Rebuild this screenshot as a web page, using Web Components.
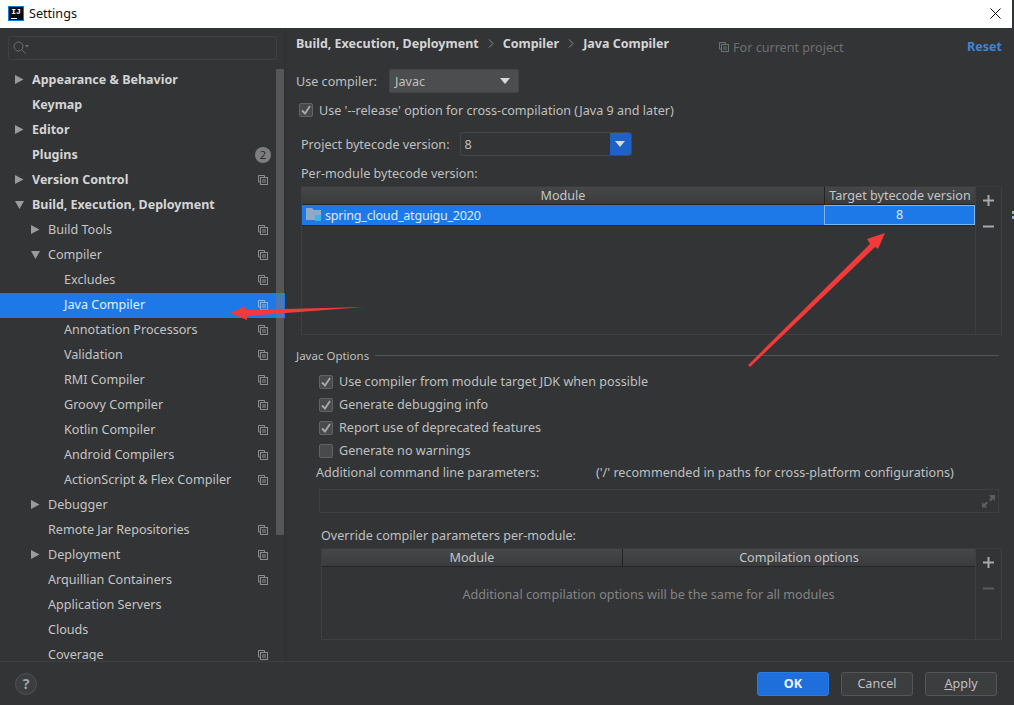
<!DOCTYPE html>
<html>
<head>
<meta charset="utf-8">
<title>Settings</title>
<style>
html, body { margin: 0; height: 100%; overflow: hidden; background: #333435; }
body { font: 12.6px "Noto Sans", sans-serif; color: #bfc0c1; }
</style>
</head>
<body>
<settings-dialog></settings-dialog>
<script>
const COPY_ICON = `<svg width="10" height="10" viewBox="0 0 10 10" fill="none" stroke="currentColor"><path d="M6.500 2V.5H.5v6.500H2"/><rect x="2.500" y="2.500" width="7" height="7"/><path d="M4 5h4M4 7h4"/></svg>`;

class TitleBar extends HTMLElement {
    connectedCallback() {
        this.attachShadow({ mode: "open" }).innerHTML = `
        <style>
        :host { display: flex; align-items: center; height: 28px; padding-bottom: 2px; box-sizing: border-box; background: #fff; color: #111; margin-right: 2px; }
        .logo { width: 16px; height: 15px; margin-left: 8px; background: #0b0b0b; border: 1px solid #0f7fd6; box-sizing: border-box; color: #fff; font: bold 8px/9px "Liberation Mono", monospace; text-align: center; position: relative; }
        .logo i { position: absolute; left: 2px; bottom: 1px; width: 6px; height: 1px; background: #fff; }
        .name { margin-left: 5px; flex: 1; }
        svg { margin-right: 11px; }
        </style>
        <div class="logo">IJ<i></i></div>
        <div class="name">Settings</div>
        <svg width="11" height="11" viewBox="0 0 11 11" stroke="#111" fill="none"><path d="M.5.5l10 10M10.500.5l-10 10"/></svg>`;
    }
}

class TreeRow extends HTMLElement {
    connectedCallback() {
        const level = +this.getAttribute("level") || 0;
        const arrow = this.getAttribute("arrow");
        const badge = this.getAttribute("badge");
        const shape = arrow === "down" ? "M0 1h9L4.500 9z" : "M0 0l8.500 4.500L0 9z";
        this.attachShadow({ mode: "open" }).innerHTML = `
        <style>
        :host { display: flex; align-items: center; height: 25px; padding-bottom: 2px; box-sizing: border-box; position: relative; white-space: nowrap; color: #c4c5c6; }
        :host([bold]) { font-weight: 700; font-size: 12.5px; color: #d3d4d5; }
        :host([selected]) { background: #1d79e8; color: #e6eefa; }
        .arrow { width: 10px; height: 9px; margin-right: 7px; flex: none; }
        .arrow svg { display: block; }
        .text { flex: 1; margin-top: -1px; }
        .side { width: 16px; margin-right: 14px; display: flex; justify-content: center; color: #8c8e8f; }
        :host([selected]) .side { color: #8fb6e6; }
        .badge { width: 16px; height: 16px; border-radius: 50%; background: #7d7e7f; color: #2b2b2b; font: 11px/16px "Noto Sans", sans-serif; text-align: center; }
        </style>
        <div class="arrow" style="margin-left:${15 + level * 16}px">${arrow ? `<svg width="9" height="9" viewBox="0 0 9 9"><path fill="#9a9b9c" d="${shape}"/></svg>` : ""}</div>
        <div class="text"><slot></slot></div>
        <div class="side">${badge ? `<div class="badge">${badge}</div>` : this.hasAttribute("copy") ? COPY_ICON : ""}</div>`;
    }
}

class SettingsTree extends HTMLElement {
    connectedCallback() {
        const items = [
            ["Appearance & Behavior", 0, "right", "bold"],
            ["Keymap", 0, "", "bold"],
            ["Editor", 0, "right", "bold"],
            ["Plugins", 0, "", "bold badge=2"],
            ["Version Control", 0, "right", "bold copy"],
            ["Build, Execution, Deployment", 0, "down", "bold"],
            ["Build Tools", 1, "right", "copy"],
            ["Compiler", 1, "down", "copy"],
            ["Excludes", 2, "", "copy"],
            ["Java Compiler", 2, "", "copy selected"],
            ["Annotation Processors", 2, "", "copy"],
            ["Validation", 2, "", "copy"],
            ["RMI Compiler", 2, "", "copy"],
            ["Groovy Compiler", 2, "", "copy"],
            ["Kotlin Compiler", 2, "", "copy"],
            ["Android Compilers", 2, "", "copy"],
            ["ActionScript & Flex Compiler", 2, "", "copy"],
            ["Debugger", 1, "right", ""],
            ["Remote Jar Repositories", 1, "", "copy"],
            ["Deployment", 1, "right", "copy"],
            ["Arquillian Containers", 1, "", "copy"],
            ["Application Servers", 1, "", ""],
            ["Clouds", 1, "", ""],
            ["Coverage", 1, "", "copy"]
        ];
        const rows = items.map(([label, level, arrow, flags]) =>
            `<tree-row level="${level}" ${arrow ? `arrow="${arrow}"` : ""} ${flags}>${label.replace("&", "&amp;")}</tree-row>`).join("");
        this.attachShadow({ mode: "open" }).innerHTML = `
        <style>
        :host { display: block; width: 285px; height: 633px; border-right: 1px solid #2e2f30; box-sizing: content-box; position: relative; overflow: hidden; flex: none; }
        .search { height: 24px; margin: 8px; border: 1px solid #3f4041; border-radius: 3px; box-sizing: border-box; display: flex; align-items: center; padding-left: 4px; width: 269px; }
        .rows { height: 593px; overflow: hidden; }
        .thumb { position: absolute; left: 276px; top: 41px; width: 8px; height: 466px; background: rgba(120,121,122,.5); }
        </style>
        <div class="search">
            <svg width="16" height="14" viewBox="0 0 16 14" fill="none"><circle cx="5.500" cy="5.500" r="4.500" stroke="#6e6f70"/><path d="M9 9l3.500 3.500" stroke="#6e6f70"/><path d="M12 4h4l-2 2.500z" fill="#6e6f70"/></svg>
        </div>
        <div class="rows">${rows}</div>
        <div class="thumb"></div>`;
    }
}

class CheckRow extends HTMLElement {
    connectedCallback() {
        this.attachShadow({ mode: "open" }).innerHTML = `
        <style>
        :host { display: flex; align-items: center; height: 23px; white-space: nowrap; }
        .box { width: 14px; height: 14px; box-sizing: border-box; margin-right: 6px; background: #494a4b; border: 1px solid #626364; border-radius: 2px; display: flex; align-items: center; justify-content: center; }
        </style>
        <div class="box">${this.hasAttribute("checked") ? `<svg width="10" height="10" viewBox="0 0 10 10" fill="none" stroke="#a9aaab" stroke-width="1.8"><path d="M1 5.500l3 3 5-7.500"/></svg>` : ""}</div>
        <slot></slot>`;
    }
}

class DataTable extends HTMLElement {
    connectedCallback() {
        const cols = (this.getAttribute("cols") || "").split("|");
        const widths = this.getAttribute("widths");
        const minusColor = this.hasAttribute("empty") ? "#5a5b5c" : "#a8a9aa";
        this.attachShadow({ mode: "open" }).innerHTML = `
        <style>
        :host { display: flex; border: 1px solid #3e3f40; border-top-color: #3a3b3c; box-sizing: border-box; }
        .main { flex: 1; display: flex; flex-direction: column; min-width: 0; }
        .head { display: grid; grid-template-columns: ${widths}; height: 17px; background: linear-gradient(#464748, #3a3b3c); border-bottom: 1px solid #242526; }
        .head div { text-align: center; line-height: 17px; border-left: 1px solid #222324; white-space: nowrap; overflow: hidden; color: #c4c5c6; }
        .head div:first-child { border-left: 0; }
        .body { flex: 1; display: flex; flex-direction: column; }
        .tools { width: 26px; flex: none; border-left: 1px solid #3e3f40; display: flex; flex-direction: column; align-items: center; padding-top: 8px; box-sizing: border-box; gap: 15px; }
        svg { display: block; }
        </style>
        <div class="main">
            <div class="head">${cols.map(c => `<div>${c}</div>`).join("")}</div>
            <div class="body"><slot></slot></div>
        </div>
        <div class="tools">
            <svg width="11" height="11" viewBox="0 0 11 11"><path fill="#a8a9aa" d="M4.500 0h2v4.500H11v2H6.500V11h-2V6.500H0v-2h4.500z"/></svg>
            <svg width="11" height="11" viewBox="0 0 11 11"><path fill="${minusColor}" d="M0 4.500h11v2H0z"/></svg>
        </div>`;
    }
}

class ModuleRow extends HTMLElement {
    connectedCallback() {
        this.attachShadow({ mode: "open" }).innerHTML = `
        <style>
        :host { display: grid; grid-template-columns: 522px 151px; height: 21px; background: #1d79e8; color: #dfe9f7; border-bottom: 1px solid #242526; box-sizing: border-box; }
        .name { display: flex; align-items: center; padding-left: 4px; gap: 3px; white-space: nowrap; }
        .name span { letter-spacing: -.24px; }
        .ver { border: 1px solid #7fb4ee; text-align: center; line-height: 18px; box-sizing: border-box; }
        </style>
        <div class="name">
            <svg width="16" height="14" viewBox="0 0 16 14"><path fill="#8fa9c9" d="M0 0h6l2 2h7v10H0z"/><rect x="9" y="7" width="6" height="6" fill="#3cb4e6"/></svg>
            <span>spring_cloud_atguigu_2020</span>
        </div>
        <div class="ver">8</div>`;
    }
}

class IdeButton extends HTMLElement {
    connectedCallback() {
        this.attachShadow({ mode: "open" }).innerHTML = `
        <style>
        :host { display: block; width: 72px; height: 24px; box-sizing: border-box; border: 1px solid #555657; border-radius: 3px; background: #3c3d3e; text-align: center; line-height: 22px; color: #bfc0c1; }
        :host([primary]) { background: #1e6fdc; border-color: #2a7be6; color: #eef3fb; font-weight: 700; }
        </style>
        <slot></slot>`;
    }
}

class ComboBox extends HTMLElement {
    connectedCallback() {
        this.attachShadow({ mode: "open" }).innerHTML = `
        <style>
        :host { display: flex; align-items: center; height: 24px; box-sizing: border-box; }
        :host([kind="plain"]) { width: 130px; background: #4c4d4f; border: 1px solid #434445; border-radius: 2px; padding: 0 8px 0 5px; }
        :host([kind="edit"]) { width: 172px; border: 1px solid #474849; border-radius: 3px; padding-left: 4px; overflow: hidden; }
        .value { flex: 1; }
        .btn { display: flex; align-items: center; justify-content: center; }
        :host([kind="edit"]) .btn { width: 21px; height: 24px; background: #1e62c8; }
        svg { display: block; }
        </style>
        <div class="value"><slot></slot></div>
        <div class="btn"><svg width="10" height="6" viewBox="0 0 10 6"><path fill="#d8d9da" d="M0 0h10L5 6z"/></svg></div>`;
    }
}

class JavaCompilerPage extends HTMLElement {
    connectedCallback() {
        this.attachShadow({ mode: "open" }).innerHTML = `
        <style>
        :host { display: block; flex: 1; min-width: 0; position: relative; }
        .crumbs { display: flex; align-items: center; height: 32px; padding: 0 12px 2px 10px; box-sizing: border-box; white-space: nowrap; font-size: 12.5px; }
        .crumbs b { color: #d3d4d5; }
        .crumbs .sep { margin: 0 9px; }
        .scope { position: absolute; left: 433px; top: 10px; height: 18px; display: flex; align-items: center; gap: 4px; color: #6f7071; }
        .reset { position: absolute; right: 12px; top: 10px; line-height: 18px; font-weight: 700; color: #3d84d8; }
        .line { display: flex; align-items: center; white-space: nowrap; }
        .compiler { margin: 9px 0 0 10px; gap: 12px; height: 24px; }
        .release { margin: 5px 0 0 13px; height: 24px; }
        .project { margin: 10px 0 0 15px; gap: 10px; height: 24px; }
        .per { margin: 7px 0 0 15px; height: 20px; }
        .modules { margin: 3px 12px 0 15px; height: 149px; }
        .javac { margin: 10px 15px 0 10px; height: 20px; gap: 6px; font-size: 11.5px; }
        .javac i { flex: 1; height: 1px; background: #555657; }
        .opts { margin: 5px 0 0 33px; }
        .extra { margin: -1px 0 0 30px; height: 22px; }
        .extra .label { width: 280px; }
        .field { margin: 6px 15px 0 33px; height: 24px; border: 1px solid #3f4041; box-sizing: border-box; display: flex; align-items: center; justify-content: flex-end; padding-right: 3px; }
        .over { margin: 12px 0 0 35px; height: 20px; }
        .params { margin: 3px 12px 0 35px; height: 92px; }
        .empty { height: 55px; padding-bottom: 20px; display: flex; align-items: center; justify-content: center; color: #838485; }
        </style>
        <div class="crumbs">
            <b>Build, Execution, Deployment</b>
            <svg class="sep" width="6" height="9" viewBox="0 0 6 9" fill="none" stroke="#8c8d8e"><path d="M1 .5l4 4-4 4"/></svg>
            <b>Compiler</b>
            <svg class="sep" width="6" height="9" viewBox="0 0 6 9" fill="none" stroke="#8c8d8e"><path d="M1 .5l4 4-4 4"/></svg>
            <b>Java Compiler</b>
        </div>
        <div class="scope">${COPY_ICON}<span>For current project</span></div>
        <div class="reset">Reset</div>
        <div class="line compiler"><span>Use compiler:</span><combo-box kind="plain">Javac</combo-box></div>
        <check-row class="release" checked>Use '--release' option for cross-compilation (Java 9 and later)</check-row>
        <div class="line project"><span>Project bytecode version:</span><combo-box kind="edit">8</combo-box></div>
        <div class="line per">Per-module bytecode version:</div>
        <data-table class="modules" cols="Module|Target bytecode version" widths="522px 151px"><module-row></module-row></data-table>
        <div class="line javac"><span>Javac Options</span><i></i></div>
        <div class="opts">
            <check-row checked>Use compiler from module target JDK when possible</check-row>
            <check-row checked>Generate debugging info</check-row>
            <check-row checked>Report use of deprecated features</check-row>
            <check-row>Generate no warnings</check-row>
        </div>
        <div class="line extra"><span class="label">Additional command line parameters:</span><span>('/' recommended in paths for cross-platform configurations)</span></div>
        <div class="field"><svg width="13" height="13" viewBox="0 0 13 13" fill="#5c5d5e"><path d="M7 0h6v6l-2-2-2.500 2.500-1.500-1.500L9 2.500zM0 7l2 2 2.500-2.500 1.500 1.500L3.500 10.500l2 2H0z"/></svg></div>
        <div class="line over">Override compiler parameters per-module:</div>
        <data-table class="params" empty cols="Module|Compilation options" widths="300px 353px"><div class="empty">Additional compilation options will be the same for all modules</div></data-table>`;
    }
}

class DialogFooter extends HTMLElement {
    connectedCallback() {
        this.attachShadow({ mode: "open" }).innerHTML = `
        <style>
        :host { display: flex; align-items: center; height: 44px; border-top: 1px solid #3e3f40; box-sizing: border-box; padding: 0 17px 0 15px; gap: 12px; }
        .help { width: 22px; height: 22px; border-radius: 50%; border: 1px solid #4f5051; background: #3c3d3e; box-sizing: border-box; color: #a3a4a5; font: bold 14px/20px "Noto Sans", sans-serif; text-align: center; margin-right: auto; }
        </style>
        <div class="help">?</div>
        <ide-button primary>OK</ide-button>
        <ide-button>Cancel</ide-button>
        <ide-button><u>A</u>pply</ide-button>`;
    }
}

class SettingsDialog extends HTMLElement {
    connectedCallback() {
        this.attachShadow({ mode: "open" }).innerHTML = `
        <style>
        :host { display: flex; flex-direction: column; width: 1014px; height: 705px; position: relative; overflow: hidden; }
        .main { display: flex; height: 633px; }
        .arrows { position: absolute; left: 0; top: 0; pointer-events: none; }
        </style>
        <title-bar></title-bar>
        <div class="main"><settings-tree></settings-tree><java-compiler-page></java-compiler-page></div>
        <dialog-footer></dialog-footer>
        <svg class="arrows" width="1014" height="705" viewBox="0 0 1014 705">
            <path fill="#f23a3a" d="M230 313l16-7v4l118-3-117 9v4z"/>
            <path fill="#f23a3a" d="M748 365L870 244l-3-5 18-6-7 16-3-2L750 367z"/>
            <path fill="#8fb5e0" d="M1012 211h2v3h-2zM1012 216h2v3h-2z"/>
        </svg>`;
    }
}

customElements.define("title-bar", TitleBar);
customElements.define("tree-row", TreeRow);
customElements.define("settings-tree", SettingsTree);
customElements.define("check-row", CheckRow);
customElements.define("data-table", DataTable);
customElements.define("module-row", ModuleRow);
customElements.define("ide-button", IdeButton);
customElements.define("combo-box", ComboBox);
customElements.define("java-compiler-page", JavaCompilerPage);
customElements.define("dialog-footer", DialogFooter);
customElements.define("settings-dialog", SettingsDialog);
</script>
</body>
</html>
